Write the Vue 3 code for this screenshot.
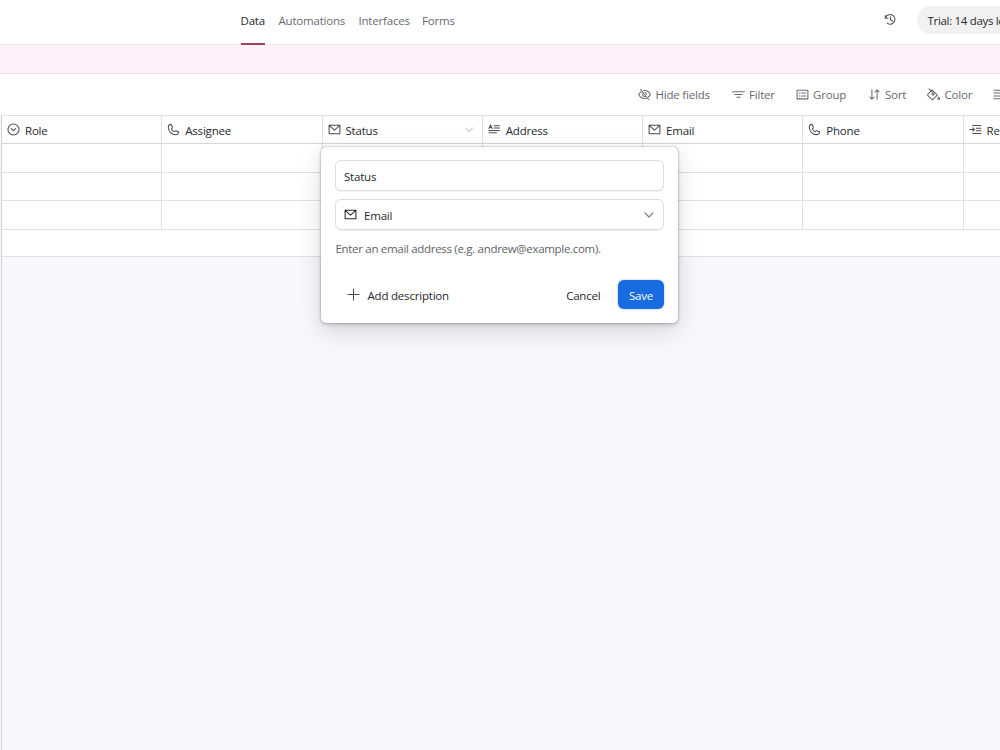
<template>
  <div class="app">
    <header class="top-bar">
      <nav class="tabs">
        <a
          v-for="tab in tabs"
          :key="tab.label"
          class="tab"
          :class="{ active: tab.label === activeTab }"
          @click="activeTab = tab.label"
        ><span class="fit" :style="{ width: tab.width + 'px' }">{{ tab.label }}</span></a>
      </nav>
      <svg class="icon history" viewBox="0 0 14 14">
        <path :d="icons.history" />
      </svg>
      <div class="trial">Trial: 14 days left</div>
    </header>

    <div class="table-tabs"></div>

    <div class="view-bar">
      <button v-for="tool in tools" :key="tool.label" class="tool" :style="{ width: tool.width + 'px' }">
        <svg class="icon" viewBox="0 0 14 14"><path :d="icons[tool.icon]" /></svg>
        <span>{{ tool.label }}</span>
      </button>
    </div>

    <main class="grid">
      <div class="row head">
        <div v-for="field in fields" :key="field.name" class="cell">
          <svg class="icon" viewBox="0 0 14 14"><path :d="icons[field.icon]" /></svg>
          <span class="field-name">{{ field.name }}</span>
          <svg v-if="field.name === editing" class="caret" viewBox="0 0 10 6"><path d="M1.500 1l3.500 3.500L8.500 1" /></svg>
        </div>
      </div>
      <div v-for="n in 3" :key="n" class="row">
        <div v-for="field in fields" :key="field.name" class="cell"></div>
      </div>
      <div class="row add-row"></div>
    </main>

    <div class="popover">
      <input v-model="fieldName" class="control" type="text" />
      <div class="control select">
        <svg class="icon" viewBox="0 0 14 14"><path :d="icons.email" /></svg>
        <span>Email</span>
        <svg class="caret" viewBox="0 0 10 6"><path d="M1 1l4 4 4-4" /></svg>
      </div>
      <p class="hint">Enter an email address (e.g. andrew@example.com).</p>
      <div class="actions">
        <button class="btn add">
          <svg class="icon" viewBox="0 0 14 14"><path :d="icons.plus" /></svg>
          <span>Add description</span>
        </button>
        <button class="btn cancel">Cancel</button>
        <button class="btn save">Save</button>
      </div>
    </div>
  </div>
</template>

<script setup>
import { ref } from 'vue';

const activeTab = ref('Data');
const editing = ref('Status');
const fieldName = ref('Status');

const tabs = [
  { label: 'Data', width: 24 },
  { label: 'Automations', width: 66 },
  { label: 'Interfaces', width: 49.5 },
  { label: 'Forms', width: 32 }
];

const tools = [
  { label: 'Hide fields', icon: 'hide', width: 93.5 },
  { label: 'Filter', icon: 'filter', width: 64 },
  { label: 'Group', icon: 'group', width: 72 },
  { label: 'Sort', icon: 'sort', width: 59.5 },
  { label: 'Color', icon: 'color', width: 66 },
  { label: 'Row height', icon: 'height', width: 90 }
];

const fields = [
  { name: 'Role', icon: 'select' },
  { name: 'Assignee', icon: 'phone' },
  { name: 'Status', icon: 'email' },
  { name: 'Address', icon: 'text' },
  { name: 'Email', icon: 'email' },
  { name: 'Phone', icon: 'phone' },
  { name: 'Request', icon: 'lookup' }
];

const icons = {
  history: 'M1.400 2.600v3h3M1.600 5.400a5.200 5.200 0 1 1 1.800 5.600M7 4v3.200l2.600 1.500',
  hide: 'M2.600 1.600l8.800 10.800M4.600 3.500C2 4.600.7 7 .7 7s2 4.200 6.300 4.200c1 0 1.900-.2 2.700-.6M6 2.900c.3-.1.7-.1 1-.1C11.300 2.800 13.300 7 13.300 7s-.7 1.500-2.200 2.700M5.600 5.400a2.100 2.100 0 0 0 2.900 3.100M7.400 4.900a2.100 2.100 0 0 1 1.700 1.900',
  filter: 'M.7 4h12.600M3 7h8M5.300 10h3.400',
  group: 'M1.200 2.300h11.600v9.400H1.200zM3.600 5.500h.7M6 5.500h4.500M3.600 8.500h.7M6 8.500h4.500',
  sort: 'M4.200 2v10M1.900 9.700L4.200 12l2.300-2.300M9.800 12V2M7.500 4.300L9.800 2l2.300 2.300',
  color: 'M2.200.9l4 4M5.500 1.900l5.700 5.700-4.700 4.600c-.4.400-1 .4-1.400 0L1 8.100c-.4-.4-.4-1 0-1.400zM7.200 5.800a1 1 0 1 1-1.400 1.400 1 1 0 0 1 1.400-1.400M12.600 9.700c.6.9.9 1.400.9 1.900a.9.900 0 0 1-1.800 0c0-.5.3-1 .9-1.900z',
  height: 'M1 2.500h12M1 5.500h12M1 8.500h12M1 11.500h12',
  select: 'M13 7A6 6 0 1 1 1 7a6 6 0 0 1 12 0zM4.700 6.100L7 8.300l2.300-2.200',
  phone: 'M4.300 1.400l1.400 3c.1.300.1.500-.1.800L4.700 6.400c.6 1.300 1.600 2.300 2.900 2.900l1.200-.9c.2-.2.500-.2.800-.1l3 1.400c-.2 1.800-1.500 2.900-3.200 2.900C5 12.600 1.400 9 1.400 4.600c0-1.700 1.100-3 2.900-3.200z',
  email: 'M1.200 2.400h11.600v9.100H1.200zM1.200 2.500L7 7.800l5.800-5.300',
  text: 'M1 6l1.700-4L4.400 6M1.600 4.700h2.200M6.500 3h5.800M6.500 5.500h5.800M1.200 8h11M1.200 10.500h8',
  lookup: 'M4 2.700h8.800M7.800 5.600h5M7.800 8.400h5M4 11.300h8.800M.8 7h5M4.100 5.200L5.900 7 4.100 8.800',
  plus: 'M7 1v12M1 7h12'
};
</script>

<style>
body {
  margin: 0;
  overflow: hidden;
}
</style>

<style scoped>
.app {
  position: relative;
  height: 750px;
  overflow: hidden;
  display: flex;
  flex-direction: column;
  font-family: "Open Sans", "Noto Sans", sans-serif;
  font-size: 11.5px;
  letter-spacing: -0.2px;
  color: #26282d;
  background-color: #f6f8fc;
}

button,
input {
  font: inherit;
  letter-spacing: inherit;
  color: inherit;
}

.icon {
  width: 13px;
  height: 13px;
  flex: none;
}

.icon,
.caret {
  fill: none;
  stroke: currentColor;
  stroke-width: 1.1;
  stroke-linecap: round;
  stroke-linejoin: round;
}

.caret {
  width: 10px;
  height: 6px;
  margin-left: auto;
}

.top-bar {
  box-sizing: border-box;
  height: 45px;
  flex: none;
  display: flex;
  padding-left: 240.5px;
  background-color: white;
  border-bottom: 1px solid #eeeaee;
}

.tabs {
  display: flex;
  gap: 14px;
}

.tab {
  height: 43px;
  line-height: 42px;
  color: #686b73;
  cursor: pointer;
  border-bottom: 2px solid transparent;
}

.tab.active {
  color: #26282d;
  border-color: #a44258;
}

.fit {
  display: block;
  white-space: nowrap;
}

.history {
  margin: 13px 20.5px 0 auto;
  stroke: #4a4c52;
}

.trial {
  box-sizing: border-box;
  width: 83px;
  height: 28px;
  margin-top: 6px;
  padding-left: 10.5px;
  line-height: 29px;
  letter-spacing: -0.32px;
  white-space: nowrap;
  overflow: hidden;
  background-color: #f2f2f2;
  border-radius: 14px 0 0 14px;
}

.table-tabs {
  height: 28px;
  flex: none;
  background-color: #fff0fa;
  border-bottom: 1px solid #e6dfe6;
}

.view-bar {
  height: 41px;
  flex: none;
  display: flex;
  padding-left: 638px;
  background-color: white;
}

.tool {
  display: flex;
  align-items: center;
  gap: 4.5px;
  flex: none;
  padding: 0;
  border: none;
  background: none;
  color: #666971;
  white-space: nowrap;
}

.grid {
  flex: 1;
  margin-left: 1px;
  border-left: 1px solid #cfd1d5;
  border-top: 1px solid #dfe1e5;
}

.row {
  box-sizing: border-box;
  height: 28.5px;
  display: flex;
  background-color: white;
  border-bottom: 1px solid #dfe2e4;
}

.row.head {
  height: 28px;
  border-color: #d4d6da;
}

.row.add-row {
  height: 27.5px;
}

.cell {
  box-sizing: border-box;
  width: 160.25px;
  flex: none;
  display: flex;
  align-items: center;
  gap: 5px;
  padding: 0 8px 0 5px;
  border-right: 1px solid #dde1e3;
}

.cell .icon {
  stroke: #4a4c52;
}

.cell .caret {
  stroke: #cfd1d5;
}

.field-name {
  padding-top: 2px;
}

.popover {
  position: absolute;
  left: 321px;
  top: 147px;
  box-sizing: border-box;
  width: 357px;
  height: 176px;
  padding: 13px 14px;
  background-color: white;
  border-radius: 5px;
  box-shadow: 0 0 2px rgba(0, 0, 0, 0.4), 0 2px 4px rgba(0, 0, 0, 0.14), 0 8px 24px rgba(0, 0, 0, 0.14);
}

.control {
  display: block;
  box-sizing: border-box;
  width: 329px;
  height: 31px;
  padding: 2px 9px 0 8px;
  background-color: white;
  border: 1px solid #dddddf;
  border-radius: 6px;
  box-shadow: 0 1px 1px rgba(0, 0, 0, 0.06);
  outline: none;
}

.select {
  display: flex;
  align-items: center;
  gap: 7px;
  margin-top: 8px;
}

.select .icon,
.select .caret {
  position: relative;
  top: -1px;
}

.select .caret {
  stroke: #7c7e84;
}

.hint {
  margin: 10px 0 0 0.5px;
  line-height: 18px;
  letter-spacing: -0.31px;
  color: #606268;
  white-space: nowrap;
}

.actions {
  display: flex;
  align-items: center;
  margin-top: 21px;
}

.btn {
  height: 30px;
  padding: 2px 0 0;
  display: flex;
  align-items: center;
  border: none;
  background: none;
  white-space: nowrap;
}

.btn.add {
  gap: 8px;
  margin: 0 auto 0 11.5px;
}

.btn.add .icon {
  position: relative;
  top: -1px;
  stroke: #4a4c52;
}

.btn.cancel {
  margin-right: 17.5px;
}

.btn.save {
  width: 46px;
  height: 29px;
  justify-content: center;
  color: white;
  background-color: #176ce0;
  border-radius: 6px;
  box-shadow: 0 0 2px rgba(0, 60, 160, 0.45);
}
</style>
